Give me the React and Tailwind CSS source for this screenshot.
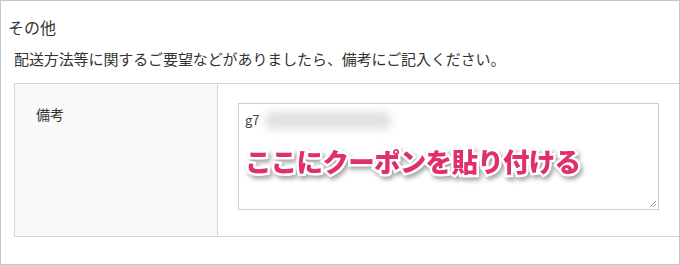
export default function App() {
  return (
    <div className="w-[680px] h-[265px] border border-[#c6c6c6] bg-white overflow-hidden font-['Noto_Sans_CJK_JP','Noto_Sans',sans-serif] text-[#333]">
      <h2 className="pl-[7px] pt-[14px] text-[16px] leading-[24px]">その他</h2>
      <p className="ml-[13px] mt-[9px] text-[15px] leading-[22px] tracking-[-0.1px]">
        配送方法等に関するご要望などがありましたら、備考にご記入ください。
      </p>
      <div className="ml-[13px] mt-[13px] -mr-px flex h-[154px] border-y border-l border-[#d6d6d6]">
        <div className="w-[203px] shrink-0 bg-[#f9f9f9] border-r border-[#d6d6d6] pl-[21px] pt-[20px] text-[14px] leading-[20px]">
          備考
        </div>
        <div className="flex-1 pl-[20px] pt-[19px]">
          <div className="relative w-[421px] h-[107px] border border-[#cfcfcf] bg-white px-[6px] pt-[7px]">
            <div className="flex items-center gap-[2px] text-[13px] leading-[18px] text-[#444]">
              <span>g7</span>
              <span className="ml-[3px] h-[17px] w-[126px] rounded-[6px] bg-[#e0e0e0] blur-[4px]" />
            </div>
            <div className="mt-[16px] text-[26.5px] leading-[31px] font-black tracking-[-0.7px] text-[#e0306b] [-webkit-text-stroke:5px_#ffffff] [paint-order:stroke_fill] drop-shadow-[2px_3px_2px_rgba(0,0,0,0.35)]">
              ここにクーポンを貼り付ける
            </div>
            <svg className="absolute right-[1px] bottom-[1px]" width="9" height="9" viewBox="0 0 9 9">
              <path d="M8 2 L2 8 M8 5 L5 8" stroke="#999" strokeWidth="1" />
            </svg>
          </div>
        </div>
      </div>
    </div>
  );
}
